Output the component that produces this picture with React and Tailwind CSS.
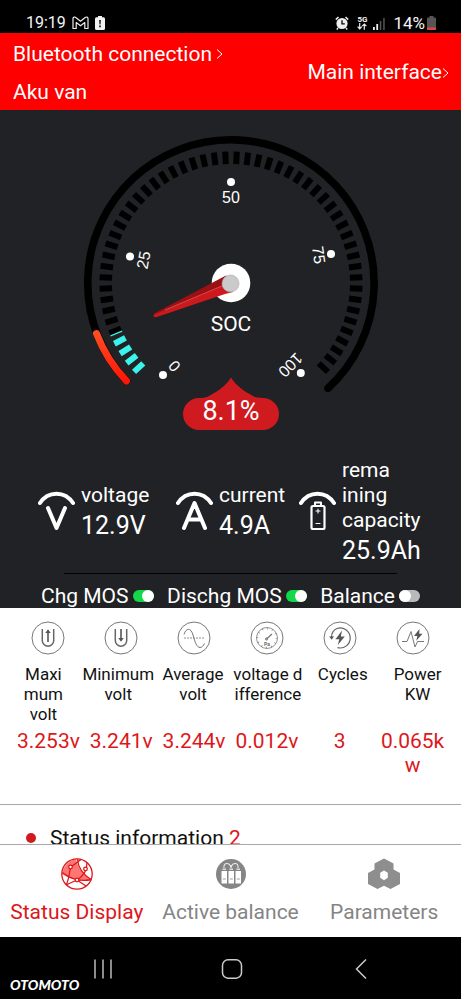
import { useState } from "react";

const readings = [
  { label: "Maxi\nmum\nvolt", value: "3.253v", icon: "max" },
  { label: "Minimum\nvolt", value: "3.241v", icon: "min" },
  { label: "Average\nvolt", value: "3.244v", icon: "avg" },
  { label: "voltage d\nifference", value: "0.012v", icon: "diff" },
  { label: "Cycles", value: "3", icon: "cycles" },
  { label: "Power\nKW", value: "0.065k\nw", icon: "power" },
];

const tickAngles = Array.from({ length: 54 }, (_, i) => -132.5 + i * 5);

function StatusBar() {
  return (
    <div className="flex h-[33px] shrink-0 items-end justify-between bg-black pr-[25px] pl-[26px] text-base leading-5 text-gray-100">
      <div className="flex items-center gap-1.5">
        <span>19:19</span>
        <svg width="17" height="14" viewBox="0 0 17 14" fill="none" stroke="#eee" strokeWidth="1.2" strokeLinejoin="round">
          <path d="M1 12.5V2.6C1 1 2.800.6 3.800 1.500L8.500 5.200L13.200 1.500C14.300.6 16 1 16 2.600V12.500H12.800V6.500L8.500 9.800L4.200 6.500V12.500Z" />
        </svg>
        <svg width="10" height="14" viewBox="0 0 10 14">
          <path d="M3 0h4v1.200h1.500A1.500 1.500 0 0 1 10 2.700v9.800A1.500 1.500 0 0 1 8.500 14h-7A1.500 1.500 0 0 1 0 12.500V2.700A1.500 1.500 0 0 1 1.500 1.200H3z" fill="#f2f2f2" />
          <path d="M4.200 4h1.600l-.3 4.500h-1zM4.200 9.600h1.600v1.600H4.200z" fill="#000" />
        </svg>
      </div>
      <div className="flex items-center">
        <svg className="mr-2" width="14" height="14" viewBox="0 0 14 14">
          <circle cx="7" cy="7.500" r="5.600" fill="#eee" />
          <path d="M.8 3.600L3.500 1M13.200 3.600L10.500 1M3 12l-1.200 1.400M11 12l1.200 1.400" stroke="#eee" strokeWidth="1.500" />
          <path d="M7 4.300v3.600h2.800" stroke="#000" strokeWidth="1.300" fill="none" />
        </svg>
        <div className="mr-1.5 flex flex-col items-center">
          <span className="text-[8px] leading-[7px] font-bold">5G</span>
          <svg width="10" height="7" viewBox="0 0 10 7" fill="none" stroke="#eee" strokeWidth="1.200">
            <path d="M2.700 0v5.500M.6 3.600l2.100 2.200l2.100-2.200M7.300 6.800V1M5.200 3.200l2.100-2.200l2.100 2.200" />
          </svg>
        </div>
        <svg className="mr-2" width="12" height="13" viewBox="0 0 12 13">
          <path d="M0 10h1.800v3H0zM3.300 7h1.800v6H3.300z" fill="#eee" />
          <path d="M6.800 4h1.500v9H6.800zM10.200 1h1.500v12h-1.500z" fill="#555" />
        </svg>
        <span className="text-[17px]">14%</span>
        <svg className="ml-0.5" width="9" height="14" viewBox="0 0 9 14">
          <path d="M2.500 0h4v1.500H8.200L9 2.300V13a1 1 0 0 1-1 1H1a1 1 0 0 1-1-1V2.300L.8 1.500h1.700z" fill="#555" />
          <path d="M0 11.500h9V13a1 1 0 0 1-1 1H1a1 1 0 0 1-1-1z" fill="#e0483e" />
        </svg>
      </div>
    </div>
  );
}

function Chevron() {
  return (
    <svg width="7" height="12" viewBox="0 0 7 12" fill="none" stroke="white" strokeWidth="1">
      <path d="M1 1.500L6 6L1 10.500" />
    </svg>
  );
}

function Gauge() {
  return (
    <svg className="mx-auto block" width="300" height="300" viewBox="-150 -150 300 300" role="img" aria-label="SOC gauge">
      <defs>
        <linearGradient id="low" x1="0" y1="0" x2="0" y2="1">
          <stop offset="0" stopColor="#ff4d22" />
          <stop offset="1" stopColor="#fb1708" />
        </linearGradient>
      </defs>

      {/* Outer ring */}
      <path d="M-104.500 98A143.200 143.200 0 1 1 97 105.300" fill="none" stroke="#000" strokeWidth="7.600" strokeLinecap="round" />
      <path d="M-134.500 50.500A143.500 143.500 0 0 0 -104.500 98" fill="none" stroke="url(#low)" strokeWidth="7" strokeLinecap="round" />

      {/* Ticks */}
      {tickAngles.map((angle, i) => (
        <rect key={angle} x="-3" y="-131.500" width="6" height="12.500" fill={i < 4 ? "#3bf3ea" : "#000"} transform={`rotate(${angle})`} />
      ))}
      <rect x="-3.400" y="-131.500" width="1.300" height="12.500" fill="#3bf3ea" transform="rotate(-112.500)" />

      {/* Scale */}
      <g fill="#fff">
        <circle cx="0" cy="-101" r="4" />
        <circle cx="-101" cy="-26.500" r="4" />
        <circle cx="100" cy="-29" r="4" />
        <circle cx="-68" cy="92" r="4" />
        <circle cx="69.800" cy="90" r="4" />
      </g>
      <g fill="#fff" fontSize="16" textAnchor="middle" fontFamily="Liberation Sans, sans-serif">
        <text transform="translate(0 -86)" y="5.500">50</text>
        <text transform="translate(-87.500 -23) rotate(-79)" y="5.500">25</text>
        <text transform="translate(87.800 -28) rotate(82)" y="5.500">75</text>
        <text transform="translate(-56.500 83) rotate(-130)" y="5.500">0</text>
        <text transform="translate(59.500 82) rotate(135)" y="5.500">100</text>
      </g>

      {/* Needle */}
      <circle cx="0" cy="0" r="19.300" fill="#fff" />
      <path d="M-77.500 32.500L-76.500 30.300L-5 -7.500L0 0L-76 33Z" fill="#9c1013" />
      <path d="M-77.500 32L-4 .5L2 9L-6 11L-75 34.200L-77 34Z" fill="#cb191d" />
      <path d="M-66 27L-8 2.500" stroke="#d8736c" strokeWidth=".6" />
      <circle cx="-.5" cy=".5" r="8.500" fill="#cbcaca" stroke="#aaa" strokeWidth=".6" />
      <text x="0" y="48" fontSize="21" fill="#fff" textAnchor="middle">SOC</text>

      {/* Value badge */}
      <path d="M0 94.500C5 103 13 108 22 113C24 114.500 28 115 32 115A16 16 0 0 1 32 147H-32A16 16 0 0 1 -32 115C-28 115 -24 114.500 -22 113C-13 108 -5 103 0 94.500Z" fill="#cf1b1f" />
      <text x="0" y="137" fontSize="27" fill="#fff" textAnchor="middle">8.1%</text>
    </svg>
  );
}

function Stat({ label, value, children }) {
  return (
    <div className="flex items-center gap-1.5">
      <svg className="mb-1.5 shrink-0" width="37" height="40" viewBox="0 0 37 40" fill="none" stroke="white" strokeLinecap="round" strokeLinejoin="round">
        <path d="M2 12C10 -.5 27 -.5 35 12" strokeWidth="4" />
        {children}
      </svg>
      <div>
        <p className="text-[21px] leading-[25px] whitespace-pre-line">{label}</p>
        <p className="text-[25px] leading-9">{value}</p>
      </div>
    </div>
  );
}

function Toggle({ label, checked, onChange }) {
  return (
    <label className="flex items-center gap-1 text-[21px] leading-6 whitespace-nowrap">
      {label}
      <input
        type="checkbox"
        checked={checked}
        onChange={(e) => onChange(e.target.checked)}
        className="flex h-3 w-[21px] appearance-none rounded-full bg-[#b9b9b9] before:size-3 before:rounded-full before:bg-white checked:justify-end checked:bg-[#12d84a]"
      />
    </label>
  );
}

function ReadingIcon({ name }) {
  return (
    <svg className="mx-auto" width="34" height="34" viewBox="0 0 34 34" fill="none" stroke="#777" strokeWidth="1">
      <circle cx="17" cy="17" r="16" />
      {(name === "max" || name === "min") && (
        <path d="M11.300 8V19.500A5.700 5.700 0 0 0 22.700 19.500V8" stroke="#666" strokeWidth="1.500" />
      )}
      {name === "max" && (
        <>
          <path d="M17 21V11" stroke="#555" strokeWidth="1.600" />
          <path d="M14.300 12L17 8.200L19.700 12Z" fill="#555" stroke="none" />
        </>
      )}
      {name === "min" && (
        <>
          <path d="M17 8V18" stroke="#555" strokeWidth="1.600" />
          <path d="M14.300 17L17 20.800L19.700 17Z" fill="#555" stroke="none" />
        </>
      )}
      {name === "avg" && (
        <>
          <path d="M7 13.500C9 6.500 14 6.500 16 14C18 21.500 20 26.500 23 26.500C25 26.500 26 25 27.500 22.500" />
          <path d="M7 17H28" strokeDasharray="2 1" strokeWidth=".8" />
        </>
      )}
      {name === "diff" && (
        <>
          <circle cx="17" cy="17" r="10.500" strokeWidth=".8" />
          <circle cx="17" cy="17" r="9.500" strokeWidth="1.800" strokeDasharray=".7 4.270" />
          <path d="M16 18.500L22 13" strokeWidth="1.200" />
          <circle cx="16.500" cy="18" r="1.200" strokeWidth=".8" />
          <text x="17" y="25" fontSize="5" fontWeight="bold" fill="#666" stroke="none" textAnchor="middle">Pa</text>
        </>
      )}
      {name === "cycles" && (
        <>
          <path d="M14 7.500A10 10 0 1 1 14.500 26.600M8.500 16.500C8.500 12.500 10.500 9 14 7.500" stroke="#666" strokeWidth="1.200" />
          <path d="M6.200 15.500L8.700 18.800L11 15.300Z" fill="#555" stroke="none" />
          <path d="M19 9.500L12.500 18.200H16.300L14.800 24L21.800 15.500H17.800Z" fill="#555" stroke="none" />
        </>
      )}
      {name === "power" && (
        <>
          <path d="M6 20.500H11L15 10.500L19 26L21.500 20.500H28" />
          <path d="M23.500 8L18 15H21.300L20.300 19.800L26.500 12.700H23.200Z" fill="#555" stroke="none" />
        </>
      )}
    </svg>
  );
}

function Tab({ label, active, onClick, children }) {
  return (
    <button
      onClick={onClick}
      className={`flex flex-1 flex-col items-center gap-2 pt-[13px] text-[21px] leading-7 whitespace-nowrap ${active ? "text-[#dc181c]" : "text-[#858585]"}`}
    >
      {children}
      {label}
    </button>
  );
}

export default function App() {
  const [charge, setCharge] = useState(true);
  const [discharge, setDischarge] = useState(true);
  const [balance, setBalance] = useState(false);
  const [tab, setTab] = useState("status");

  return (
    <div className="flex h-screen flex-col bg-white font-[Roboto,sans-serif]">
      <StatusBar />

      <header className="flex h-[77px] shrink-0 items-center justify-between bg-[#fe0000] pt-0.5 pr-3 pl-[13px] text-[21px] text-white">
        <div>
          <button className="flex items-center gap-1 leading-[38px]">
            Bluetooth connection
            <Chevron />
          </button>
          <p className="leading-[38px]">Aku van</p>
        </div>
        <button className="flex items-center">
          Main interface
          <Chevron />
        </button>
      </header>

      <main className="min-h-0 flex-1 overflow-y-auto [scrollbar-width:none]">
        <section className="bg-[#212226] pt-[23px] text-white">
          <Gauge />

          <div className="mt-[25px] grid grid-cols-[138fr_123fr_124fr] px-[38px]">
            <Stat label="voltage" value="12.9V">
              <path d="M10 17L18.500 37L27 17" strokeWidth="4" />
            </Stat>
            <Stat label="current" value="4.9A">
              <path d="M8 37L18.500 12L29 37M12 28.500H25" strokeWidth="4" />
            </Stat>
            <Stat label={"rema\nining\ncapacity"} value="25.9Ah">
              <rect x="12.500" y="15" width="13" height="23" rx="1.500" strokeWidth="2.200" />
              <path d="M16 14V11.500H22V14" strokeWidth="2" />
              <path d="M17 20H21M19 18V22M17 32.500H21" strokeWidth="1.100" />
            </Stat>
          </div>

          <hr className="mx-16 mt-1 border-black" />

          <div className="flex justify-between px-[41px] pt-2.5">
            <Toggle label="Chg MOS" checked={charge} onChange={setCharge} />
            <Toggle label="Dischg MOS" checked={discharge} onChange={setDischarge} />
            <Toggle label="Balance" checked={balance} onChange={setBalance} />
          </div>
        </section>

        <section className="border-b border-[#a8a8a8] pt-[13px] pb-[27px] text-center">
          <div className="grid grid-cols-6 px-3">
            {readings.map((r) => (
              <ReadingIcon key={r.icon} name={r.icon} />
            ))}
          </div>
          <div className="mt-[9px] grid grid-cols-6 px-1.5 text-[17px] leading-5 text-[#111]">
            {readings.map((r) => (
              <p key={r.icon} className="whitespace-pre-line">{r.label}</p>
            ))}
          </div>
          <div className="mt-[5px] grid grid-cols-6 px-3 text-[21px] leading-6 text-[#dc181c]">
            {readings.map((r) => (
              <p key={r.icon} className="whitespace-pre-line">{r.value}</p>
            ))}
          </div>
        </section>

        <section className="flex items-center px-[26px] pt-[19px] pb-5 text-[21px] leading-7 text-[#111]">
          <span className="mr-3.5 size-2.5 rounded-full bg-[#cf1b1f]" />
          <h2>
            Status information <span className="text-[#dc181c]">2</span>
          </h2>
        </section>
      </main>

      <nav className="flex h-[93px] shrink-0 border-t border-[#a8a8a8] bg-white">
        <Tab label="Status Display" active={tab === "status"} onClick={() => setTab("status")}>
          <svg width="32" height="32" viewBox="0 0 32 32" fill="none" stroke="#dc181c" strokeWidth="1.300">
            <path d="M1 19C1 10 6 3 15 1C17 10 21 15 30 22C20 24 10 22 1 16Z" fill="#ff7775" stroke="none" />
            <circle cx="16" cy="16" r="15.200" />
            <path d="M1.500 14.500C10 22 22 23.500 30.500 21.500M16.500 1C17 10 23 17 30 21.500M5 27C9 20 8 12 10 9L20 1.500M26 4.500C26 13 23 18 16 22L5 27M16 22L25 28" />
            <circle cx="9.500" cy="9" r="1.800" fill="#fff" />
            <circle cx="24.500" cy="11" r="1.800" fill="#fff" />
            <circle cx="16" cy="22" r="1.800" fill="#fff" />
          </svg>
        </Tab>
        <Tab label="Active balance" active={tab === "balance"} onClick={() => setTab("balance")}>
          <svg width="32" height="32" viewBox="0 0 32 32">
            <circle cx="16" cy="16" r="15" fill="#858585" />
            <path d="M6.500 13h5.500v12.500H6.500zM13.500 13h5.500v12.500h-5.500zM20.500 13h5.500v12.500h-5.500z" fill="#fff" />
            <path d="M7.500 10.500h3.500v1.500H7.500zM14.500 10.500h3.500v1.500h-3.500zM21.500 10.500h3.500v1.500h-3.500z" fill="#ddd" />
            <path d="M9 10C8 4 15 4 16 10C17 4 24 4 23 10M16 10V7" fill="none" stroke="#e8e8e8" strokeWidth="1.100" />
            <path d="M7.800 21h3M14.800 21h3M21.800 21h3" stroke="#858585" strokeWidth=".8" />
          </svg>
        </Tab>
        <Tab label="Parameters" active={tab === "params"} onClick={() => setTab("params")}>
          <svg width="32" height="32" viewBox="0 0 32 32">
            <path fillRule="evenodd" fill="#8e8e8e" d="M16 .5L25.500 5.500V11.500L32 15V26L22.500 31L16 27.800L9.500 31L0 26V15L6.500 11.500V5.500ZM16 12.500L12.200 14.800V19.800L16 22.200L19.800 19.800V14.800Z" />
          </svg>
        </Tab>
      </nav>

      <footer className="relative grid h-[62px] shrink-0 grid-cols-3 items-center justify-items-center bg-black pt-0.5 pr-[35px] pl-[38px]">
        <button aria-label="Recents">
          <svg width="20" height="20" viewBox="0 0 20 20" stroke="#bbb" strokeWidth="1.500">
            <path d="M2 .5V19.500M10 .5V19.500M18 .5V19.500" />
          </svg>
        </button>
        <button aria-label="Home">
          <svg width="22" height="20" viewBox="0 0 22 20" fill="none" stroke="#ccc" strokeWidth="1.500">
            <rect x="1.500" y=".8" width="19" height="18.400" rx="5.500" />
          </svg>
        </button>
        <button aria-label="Back">
          <svg width="12" height="20" viewBox="0 0 12 20" fill="none" stroke="#ccc" strokeWidth="1.500">
            <path d="M11 .5L1.500 10L11 19.500" />
          </svg>
        </button>
        <span className="absolute bottom-1.5 left-2.5 font-[Lato,sans-serif] text-sm leading-4 font-black text-white italic">OTOMOTO</span>
      </footer>
    </div>
  );
}
